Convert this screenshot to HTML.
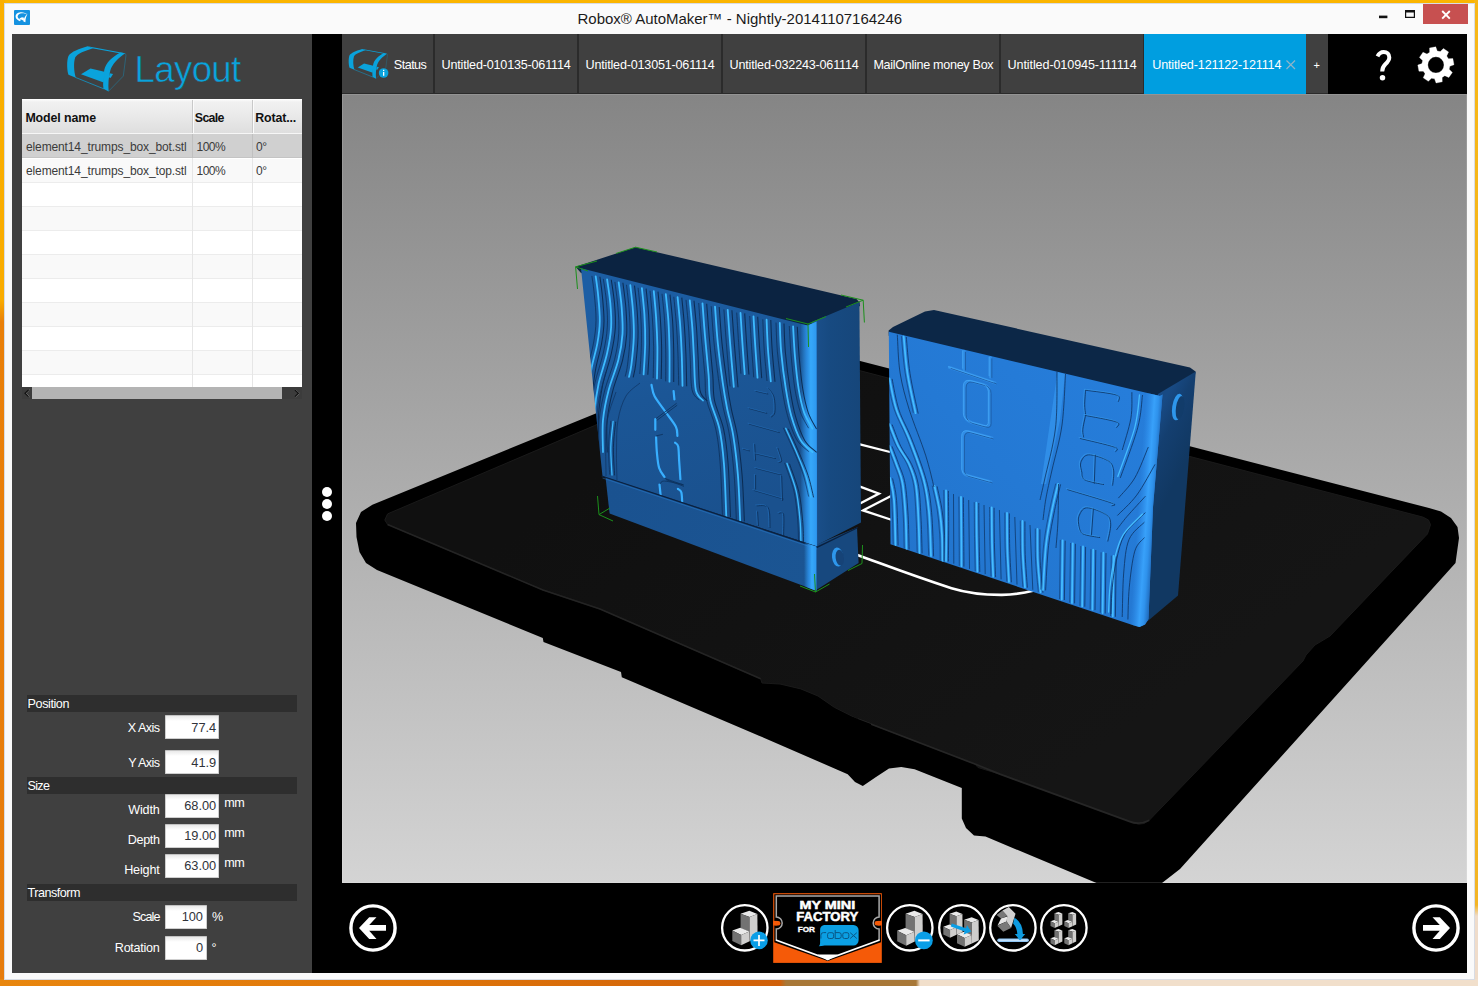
<!DOCTYPE html>
<html><head><meta charset="utf-8"><title>Robox AutoMaker</title>
<style>

html,body{margin:0;padding:0;}
body{width:1478px;height:986px;overflow:hidden;position:relative;background:#FAB400;font-family:"Liberation Sans",sans-serif;font-size:12.5px;color:#fff;}
.abs{position:absolute;}
.t{position:absolute;white-space:pre;line-height:1;}
#win{left:4px;top:3px;width:1471px;height:977px;background:#FAFAFA;box-sizing:border-box;border:1px solid #D8DCE4;}
#left{left:12px;top:34px;width:300px;height:939px;background:#404040;}
#gap{left:312px;top:34px;width:30px;height:939px;background:#000;}
#topbar{left:342px;top:34px;width:1125px;height:60px;background:#000;}
#view{left:342px;top:94px;width:1125px;height:789px;background:linear-gradient(#838383,#D4D4D4);overflow:hidden;}
#bot{left:342px;top:883px;width:1125px;height:90px;background:#000;}
.tab{position:absolute;top:34px;height:59px;background:#404040;border-bottom:1px solid #2b2b2b;box-sizing:content-box;}
.sep{position:absolute;top:34px;height:60px;width:2px;background:#2b2b2b;}
.hdr{position:absolute;left:27px;width:270px;height:17px;background:#2e2e2e;}
.inp{position:absolute;left:165px;width:54px;height:24px;background:linear-gradient(#e9e9e9 0,#f2f2f2 2px,#fff 5px);box-sizing:border-box;border:1px solid #cfcfcf;border-top-color:#c2c2c2;border-radius:1px;}
.inp.s{width:42px;}

</style></head>
<body>
<div class="abs" style="left:0;top:0;width:1478px;height:4px;background:#FBB500"></div>
<div class="abs" style="left:0;top:0;width:5px;height:986px;background:linear-gradient(#FAB000 0px,#F9AC00 300px,#E9800A 322px,#E67C0C 986px)"></div>
<div class="abs" style="left:1474px;top:0;width:4px;height:986px;background:linear-gradient(#F7B716 0px,#F3B424 905px,#EFDCCA 916px,#EFDCCA 986px)"></div>
<div class="abs" style="left:0;top:979px;width:1478px;height:7px;background:linear-gradient(90deg,#E8860E 0px,#DF760A 400px,#D0600A 780px,#A87838 786px,#A87838 916px,#F1DFCB 920px,#F1DFCB 1478px)"></div>
<div id="win" class="abs"></div>
<svg class="abs" style="left:14px;top:10px" width="16" height="15" viewBox="0 0 16 15"><rect width="16" height="15" rx="1" fill="#1592E0"/><path d="M6.5,2.2 C3,2.6 1.3,4.5 1.6,7 C2,9 4,10.5 6,11.2 L7,9.6 C5,9 3.6,7.8 3.6,6.4 C3.8,4.6 5.5,3.4 8,3.2 C10.5,3.2 12.5,3.8 13.8,4.8 C12,3 9.5,2 6.5,2.2Z M13.9,3.6 C12.5,5.5 11.5,8 11.4,12.3 L9.4,11.6 C9.6,9 11,5.5 13.9,3.6Z M5.2,8.6 L8,7.2 L10,7.8 L9.6,10.8Z" fill="#fff"/></svg>
<div class="t" style="left:577.50px;top:10px;font-size:15px;line-height:17px;color:#1a1a1a;letter-spacing:-0.013px;">Robox® AutoMaker™ - Nightly-20141107164246</div>

<div class="abs" style="left:1423px;top:4px;width:45px;height:20px;background:#C75050"></div>
<svg class="abs" style="left:1370px;top:4px" width="100" height="22" viewBox="1370 4 100 22"><path d="M1379,15.6h8.4v2.6h-8.4z" fill="#111"/><path d="M1405,10h10v8h-10z M1406.2,12.4v4.4h7.6v-4.4z" fill="#111" fill-rule="evenodd"/><path d="M1442.2,11 L1449.8,18.6 M1449.8,11 L1442.2,18.6" stroke="#fff" stroke-width="1.9" fill="none"/></svg>
<div id="left" class="abs"></div><div id="gap" class="abs"></div><div id="topbar" class="abs"></div><div id="bot" class="abs"></div>
<svg class="abs" style="left:320px;top:485px" width="14" height="38"><circle cx="7" cy="7" r="5" fill="#fff"/><circle cx="7" cy="19" r="5" fill="#fff"/><circle cx="7" cy="31" r="5" fill="#fff"/></svg>
<svg class="abs" style="left:0;top:0;width:0;height:0"><symbol id="prn" viewBox="0 0 1478 493" overflow="visible">
<path d="M265,72 C205,92 150,108 130,140 C116,175 120,245 130,272 L182,294 C168,250 165,190 177,152 C190,125 250,102 302,86 Z" fill="#0AA3DC"/>
<path d="M265,72 L528,121 L500,124 L296,87 Z" fill="#0AA3DC"/>
<path d="M495,116 C436,148 392,190 382,240 C374,290 372,340 376,372 L413,390 C408,340 413,284 424,244 C436,200 482,154 530,122 Z" fill="#0AA3DC"/>
<path d="M529,122 L535,134 L516,282 L412,389" fill="none" stroke="#0AA3DC" stroke-width="2.5"/>
<path d="M178,291 L379,372" stroke="#0AA3DC" stroke-width="5" fill="none"/>
<path d="M218,270 L285,228 L383,251 L378,327 Z" fill="#0AA3DC"/>
<path d="M420,262 L444,267 L426,295 L414,290 Z" fill="#0AA3DC"/>
</symbol></svg>
<svg class="abs" style="left:50px;top:36px" width="210" height="70"><use href="#prn" x="0" y="0" width="210" height="70.05"/></svg>
<div class="t" style="left:134.60px;top:49px;font-size:36.5px;line-height:41px;color:#0AA3DC;letter-spacing:-0.599px;-webkit-text-stroke:0.5px #404040;">Layout</div>

<div class="abs" style="left:22px;top:99px;width:280px;height:288px;background:#fff"></div>
<div class="abs" style="left:22px;top:99px;width:280px;height:35px;background:linear-gradient(#fafafa 0,#f1f1f1 2px,#e9e9e9 50%,#dedede 100%);box-sizing:border-box;border-top:1px solid #fff;border-bottom:1px solid #f6f6f6"></div>
<div class="abs" style="left:22px;top:134px;width:280px;height:24px;background:#d0d0d0;box-sizing:border-box;border-bottom:1px solid #c4c4c4"></div>
<div class="abs" style="left:22px;top:159.0px;width:280px;height:24px;background:#f9f9f9;box-sizing:border-box;border-bottom:1px solid #ececec"></div>
<div class="abs" style="left:22px;top:183.0px;width:280px;height:24px;background:#ffffff;box-sizing:border-box;border-bottom:1px solid #ececec"></div>
<div class="abs" style="left:22px;top:207.0px;width:280px;height:24px;background:#f9f9f9;box-sizing:border-box;border-bottom:1px solid #ececec"></div>
<div class="abs" style="left:22px;top:231.0px;width:280px;height:24px;background:#ffffff;box-sizing:border-box;border-bottom:1px solid #ececec"></div>
<div class="abs" style="left:22px;top:255.0px;width:280px;height:24px;background:#f9f9f9;box-sizing:border-box;border-bottom:1px solid #ececec"></div>
<div class="abs" style="left:22px;top:279.0px;width:280px;height:24px;background:#ffffff;box-sizing:border-box;border-bottom:1px solid #ececec"></div>
<div class="abs" style="left:22px;top:303.0px;width:280px;height:24px;background:#f9f9f9;box-sizing:border-box;border-bottom:1px solid #ececec"></div>
<div class="abs" style="left:22px;top:327.0px;width:280px;height:24px;background:#ffffff;box-sizing:border-box;border-bottom:1px solid #ececec"></div>
<div class="abs" style="left:22px;top:351.0px;width:280px;height:24px;background:#f9f9f9;box-sizing:border-box;border-bottom:1px solid #ececec"></div>
<div class="abs" style="left:22px;top:375.0px;width:280px;height:12.5px;background:#ffffff;box-sizing:border-box;border-bottom:1px solid #ececec"></div>
<div class="abs" style="left:192px;top:100px;width:1px;height:33px;background:#c9c9c9"></div><div class="abs" style="left:193px;top:100px;width:1px;height:33px;background:#fbfbfb"></div>
<div class="abs" style="left:192px;top:134px;width:1px;height:253px;background:#e6e6e6"></div>
<div class="abs" style="left:192px;top:134px;width:1px;height:24px;background:#c0c0c0"></div>
<div class="abs" style="left:252px;top:100px;width:1px;height:33px;background:#c9c9c9"></div><div class="abs" style="left:253px;top:100px;width:1px;height:33px;background:#fbfbfb"></div>
<div class="abs" style="left:252px;top:134px;width:1px;height:253px;background:#e6e6e6"></div>
<div class="abs" style="left:252px;top:134px;width:1px;height:24px;background:#c0c0c0"></div>
<div class="t" style="left:25.40px;top:111px;font-size:12.4px;line-height:14px;color:#111;letter-spacing:-0.106px;font-weight:bold;">Model name</div>

<div class="t" style="left:194.80px;top:111px;font-size:12.4px;line-height:14px;color:#111;letter-spacing:-0.681px;font-weight:bold;">Scale</div>

<div class="t" style="left:255.20px;top:111px;font-size:12.4px;line-height:14px;color:#111;letter-spacing:-0.128px;font-weight:bold;">Rotat...</div>

<div class="t" style="left:26.00px;top:140px;font-size:12px;line-height:14px;color:#3b3b3b;letter-spacing:-0.125px;">element14_trumps_box_bot.stl</div>

<div class="t" style="left:196.50px;top:140px;font-size:12px;line-height:14px;color:#3b3b3b;letter-spacing:-0.523px;">100%</div>

<div class="t" style="left:256.00px;top:140px;font-size:12px;line-height:14px;color:#3b3b3b;letter-spacing:-0.437px;">0°</div>

<div class="t" style="left:26.00px;top:164px;font-size:12px;line-height:14px;color:#3b3b3b;letter-spacing:-0.125px;">element14_trumps_box_top.stl</div>

<div class="t" style="left:196.50px;top:164px;font-size:12px;line-height:14px;color:#3b3b3b;letter-spacing:-0.523px;">100%</div>

<div class="t" style="left:256.00px;top:164px;font-size:12px;line-height:14px;color:#3b3b3b;letter-spacing:-0.437px;">0°</div>

<div class="abs" style="left:22px;top:387px;width:280px;height:12px;background:#3c3c3c"></div>
<div class="abs" style="left:32px;top:387px;width:250px;height:12px;background:#b4b4b4"></div>
<svg class="abs" style="left:22px;top:387px" width="280" height="12"><path d="M7.3,3 L3.8,6.3 L7.3,9.6" stroke="#b0b0b0" stroke-width="1" fill="none"/><path d="M6.6,3 L3.1,6.3 L6.6,9.6" stroke="#111" stroke-width="1.3" fill="none"/><path d="M273.7,3 L277.2,6.3 L273.7,9.6" stroke="#b0b0b0" stroke-width="1" fill="none"/><path d="M273,3 L276.5,6.3 L273,9.6" stroke="#111" stroke-width="1.3" fill="none"/></svg>
<div class="hdr" style="top:695px"></div>
<div class="t" style="left:27.60px;top:697px;font-size:12.6px;line-height:14px;color:#fff;letter-spacing:-0.428px;">Position</div>

<div class="hdr" style="top:777px"></div>
<div class="t" style="left:27.60px;top:779px;font-size:12.6px;line-height:14px;color:#fff;letter-spacing:-0.728px;">Size</div>

<div class="hdr" style="top:884px"></div>
<div class="t" style="left:27.60px;top:886px;font-size:12.6px;line-height:14px;color:#fff;letter-spacing:-0.505px;">Transform</div>

<div class="t" style="left:127.80px;top:721px;font-size:12.6px;line-height:14px;color:#fff;letter-spacing:-0.536px;">X Axis</div>

<div class="inp" style="top:715px"></div>
<div class="t" style="left:191.29px;top:720px;font-size:12.8px;line-height:15px;color:#30333a;">77.4</div>

<div class="t" style="left:128.20px;top:756px;font-size:12.6px;line-height:14px;color:#fff;letter-spacing:-0.564px;">Y Axis</div>

<div class="inp" style="top:750px"></div>
<div class="t" style="left:191.29px;top:755px;font-size:12.8px;line-height:15px;color:#30333a;">41.9</div>

<div class="t" style="left:128.20px;top:803px;font-size:12.6px;line-height:14px;color:#fff;letter-spacing:-0.162px;">Width</div>

<div class="inp" style="top:794px"></div>
<div class="t" style="left:184.17px;top:798px;font-size:12.8px;line-height:15px;color:#30333a;">68.00</div>

<div class="t" style="left:224.20px;top:796px;font-size:12.6px;line-height:14px;color:#fff;letter-spacing:-0.496px;">mm</div>

<div class="t" style="left:127.80px;top:833px;font-size:12.6px;line-height:14px;color:#fff;letter-spacing:-0.365px;">Depth</div>

<div class="inp" style="top:824px"></div>
<div class="t" style="left:184.17px;top:828px;font-size:12.8px;line-height:15px;color:#30333a;">19.00</div>

<div class="t" style="left:224.20px;top:826px;font-size:12.6px;line-height:14px;color:#fff;letter-spacing:-0.496px;">mm</div>

<div class="t" style="left:124.20px;top:863px;font-size:12.6px;line-height:14px;color:#fff;letter-spacing:-0.170px;">Height</div>

<div class="inp" style="top:854px"></div>
<div class="t" style="left:184.17px;top:858px;font-size:12.8px;line-height:15px;color:#30333a;">63.00</div>

<div class="t" style="left:224.20px;top:856px;font-size:12.6px;line-height:14px;color:#fff;letter-spacing:-0.496px;">mm</div>

<div class="t" style="left:132.60px;top:910px;font-size:12.6px;line-height:14px;color:#fff;letter-spacing:-0.904px;">Scale</div>

<div class="inp s" style="top:905px"></div>
<div class="t" style="left:181.64px;top:909px;font-size:12.8px;line-height:15px;color:#30333a;">100</div>

<div class="t" style="left:212.00px;top:910px;font-size:12.6px;line-height:14px;color:#fff;letter-spacing:-1.203px;">%</div>

<div class="t" style="left:114.80px;top:941px;font-size:12.6px;line-height:14px;color:#fff;letter-spacing:-0.266px;">Rotation</div>

<div class="inp s" style="top:936px"></div>
<div class="t" style="left:195.88px;top:940px;font-size:12.8px;line-height:15px;color:#30333a;">0</div>

<div class="t" style="left:211.60px;top:941px;font-size:12.6px;line-height:14px;color:#fff;">°</div>

<div class="tab" style="left:342px;width:91px"></div>
<div class="sep" style="left:433px"></div>
<div class="tab" style="left:435px;width:142px"></div>
<div class="sep" style="left:577px"></div>
<div class="t" style="left:441.60px;top:58px;font-size:12.6px;line-height:14px;color:#fff;letter-spacing:-0.197px;">Untitled-010135-061114</div>

<div class="tab" style="left:579px;width:142px"></div>
<div class="sep" style="left:721px"></div>
<div class="t" style="left:585.60px;top:58px;font-size:12.6px;line-height:14px;color:#fff;letter-spacing:-0.197px;">Untitled-013051-061114</div>

<div class="tab" style="left:723px;width:142px"></div>
<div class="sep" style="left:865px"></div>
<div class="t" style="left:729.60px;top:58px;font-size:12.6px;line-height:14px;color:#fff;letter-spacing:-0.197px;">Untitled-032243-061114</div>

<div class="tab" style="left:867px;width:132px"></div>
<div class="sep" style="left:999px"></div>
<div class="tab" style="left:1001px;width:142px"></div>
<div class="sep" style="left:1143px"></div>
<div class="t" style="left:1007.60px;top:58px;font-size:12.6px;line-height:14px;color:#fff;letter-spacing:-0.112px;">Untitled-010945-111114</div>

<div class="t" style="left:393.80px;top:58px;font-size:12.6px;line-height:14px;color:#fff;letter-spacing:-0.520px;">Status</div>

<div class="t" style="left:873.40px;top:58px;font-size:12.6px;line-height:14px;color:#fff;letter-spacing:-0.303px;">MailOnline money Box</div>

<svg class="abs" style="left:337px;top:39px" width="60" height="50" viewBox="337 39 60 50"><use href="#prn" x="337.3" y="42.2" width="138.6" height="46.2"/><circle cx="383.6" cy="73" r="5.6" fill="#404040"/><circle cx="383.6" cy="73" r="4.8" fill="#0AA3DC"/><rect x="383" y="72" width="1.3" height="3.8" fill="#fff"/><rect x="383" y="69.8" width="1.3" height="1.3" fill="#fff"/></svg>
<div class="abs" style="left:1144px;top:34px;width:162px;height:60px;background:#009EE0"></div>
<div class="t" style="left:1152.20px;top:58px;font-size:12.6px;line-height:14px;color:#fff;letter-spacing:-0.146px;">Untitled-121122-121114</div>

<svg class="abs" style="left:1284px;top:58px" width="14" height="14"><path d="M2.5,2.5 L11,11 M11,2.5 L2.5,11" stroke="#8FB4C8" stroke-width="1.2" fill="none"/></svg>
<div class="tab" style="left:1306px;width:22px"></div>
<div class="t" style="left:1313.60px;top:59px;font-size:11px;line-height:12px;color:#fff;">+</div>

<svg class="abs" style="left:1370px;top:44px" width="30" height="42" viewBox="1370 44 30 42"><path d="M1377.5,56.4 C1379,53.4 1381,52 1383.7,52 C1387,52 1389.3,54.2 1389.3,57.4 C1389.3,60.4 1387.4,62.2 1385.3,64.2 C1383.2,66.2 1382.2,67.8 1382.2,71.6" stroke="#fff" stroke-width="4" fill="none"/><circle cx="1382.5" cy="77.7" r="2.75" fill="#fff"/></svg>
<svg class="abs" style="left:1414px;top:43px" width="46" height="44" viewBox="1414 43 46 44"><path d="M1429.65,52.37 L1429.56,47.95 L1435.74,46.80 L1437.24,50.96 L1440.34,51.62 L1443.41,48.43 L1448.59,51.99 L1446.70,55.99 L1448.43,58.65 L1452.85,58.56 L1454.00,64.74 L1449.84,66.24 L1449.18,69.34 L1452.37,72.41 L1448.81,77.59 L1444.81,75.70 L1442.15,77.43 L1442.24,81.85 L1436.06,83.00 L1434.56,78.84 L1431.46,78.18 L1428.39,81.37 L1423.21,77.81 L1425.10,73.81 L1423.37,71.15 L1418.95,71.24 L1417.80,65.06 L1421.96,63.56 L1422.62,60.46 L1419.43,57.39 L1422.99,52.21 L1426.99,54.10 Z M1444.00,64.9 a8.1,8.1 0 1,0 -16.2,0 a8.1,8.1 0 1,0 16.2,0Z" fill="#fff" fill-rule="evenodd" stroke="#fff" stroke-width="0.3" stroke-linejoin="round"/></svg><svg class="abs" style="left:342px;top:94px" width="1125" height="789" viewBox="342 94 1125 789"><defs>
<linearGradient id="bgg" x1="0" y1="94" x2="0" y2="883" gradientUnits="userSpaceOnUse"><stop offset="0" stop-color="#858585"/><stop offset="1" stop-color="#D4D4D4"/></linearGradient>
<linearGradient id="bedg" x1="700" y1="400" x2="1000" y2="820" gradientUnits="userSpaceOnUse"><stop offset="0" stop-color="#101010"/><stop offset="1" stop-color="#151515"/></linearGradient>
<linearGradient id="lfg" x1="640" y1="290" x2="700" y2="520" gradientUnits="userSpaceOnUse"><stop offset="0" stop-color="#1C5EA4"/><stop offset=".45" stop-color="#1B5696"/><stop offset="1" stop-color="#1A518E"/></linearGradient>
<linearGradient id="lbg" x1="605" y1="500" x2="816" y2="570" gradientUnits="userSpaceOnUse"><stop offset="0" stop-color="#1A5290"/><stop offset="1" stop-color="#1B5593"/></linearGradient>
<linearGradient id="lsg" x1="816" y1="0" x2="862" y2="0" gradientUnits="userSpaceOnUse"><stop offset="0" stop-color="#1A4F8A"/><stop offset=".3" stop-color="#174A81"/><stop offset="1" stop-color="#16467A"/></linearGradient>
<linearGradient id="lhl" x1="0" y1="0" x2="1" y2="0"><stop offset="0" stop-color="#2E9BF0" stop-opacity="0"/><stop offset=".35" stop-color="#2C90E8" stop-opacity=".85"/><stop offset=".6" stop-color="#36A8FA"/><stop offset=".9" stop-color="#2F9AF1"/><stop offset="1" stop-color="#2888E0"/></linearGradient>
<linearGradient id="rfg" x1="890" y1="560" x2="1100" y2="360" gradientUnits="userSpaceOnUse"><stop offset="0" stop-color="#2274CC"/><stop offset=".5" stop-color="#2479D4"/><stop offset="1" stop-color="#267DDA"/></linearGradient>
<linearGradient id="rhl" x1="0" y1="0" x2="1" y2="0"><stop offset="0" stop-color="#2E90EE" stop-opacity="0"/><stop offset=".5" stop-color="#38A1FA"/><stop offset=".72" stop-color="#2F92EC"/><stop offset="1" stop-color="#1F69BA"/></linearGradient>
<linearGradient id="rsg" x1="1155" y1="420" x2="1196" y2="440" gradientUnits="userSpaceOnUse"><stop offset="0" stop-color="#184A84"/><stop offset=".35" stop-color="#143F70"/><stop offset="1" stop-color="#113862"/></linearGradient>
</defs><rect x="342" y="94" width="1125" height="789" fill="url(#bgg)"/><polygon points="773.0,338.5 1429.0,508.0 1441.0,511.5 1451.0,518.0 1457.5,527.0 1459.0,538.0 1455.5,563.0 1180.0,869.0 1162.0,883.0 1096.5,883.0 985.5,836.6 974.0,835.5 966.0,828.0 961.8,818.4 961.8,788.0 914.6,769.2 901.3,766.9 889.0,768.6 876.0,777.0 862.8,786.0 855.0,782.0 847.7,774.2 759.0,735.7 621.8,677.2 621.0,672.0 543.5,642.0 542.8,638.0 377.0,570.0 366.0,563.0 359.5,552.0 356.5,537.0 356.0,523.0 361.0,512.0 372.4,504.7 594.5,414.0" fill="#000"/><polygon points="770.0,347.3 1422.9,517.1 1428.5,520.0 1430.5,524.7 1427.5,533.9 1330.0,636.0 1315.0,645.0 1306.0,655.0 1303.0,661.0 1149.3,820.2 1144.0,823.5 1138.4,824.2 1129.3,821.3 1000.0,774.2 978.0,767.5 975.0,764.0 857.7,719.0 834.3,707.3 818.0,696.0 800.8,688.9 780.0,684.0 762.0,683.0 760.7,678.8 600.0,609.0 543.0,590.0 387.6,524.5 384.8,520.0 387.6,513.9 594.5,425.6" fill="url(#bedg)" stroke="#1a1a1a" stroke-width="1"/><path d="M387.6,524.5 L543,590 L600,609 L760.7,678.8" stroke="#242424" stroke-width="1.6" fill="none"/><path d="M857.7,719 L975,764 L1000,774.2 L1129.3,821.3 Q1139,825.5 1149.3,820.2" stroke="#262626" stroke-width="1.8" fill="none"/><polygon points="852.5,717 871,724 871,740 852.5,733" fill="#000"/><g stroke="#fff" fill="none" stroke-width="2.3" stroke-linejoin="miter"><path d="M858,443.8 L892,452.5"/><path d="M858,485.8 L879,493.6 L860,503.6"/><path d="M892,495.4 L863,510.4 L892,520"/><path d="M855,554.2 C880,563 905,573 951.5,588.3 C965,592.5 980,595 1002,594.9 C1012,594.6 1022,593.5 1034,590.5" stroke-width="2.6"/></g><polygon points="575.6,266.8 635.5,247.2 856.5,299.0 859.5,302.5 860.0,306.0 808.0,330.0 581.0,273.0" fill="#0B2341"/><polygon points="812.0,322.0 859.4,302.0 861.0,522.5 816.0,545.5" fill="url(#lsg)"/><polygon points="815.5,545.0 857.0,527.5 858.6,563.0 815.5,590.5" fill="#17487E"/><polygon points="605.5,477.0 816.0,546.5 816.0,590.5 609.6,513.6" fill="url(#lbg)"/><polygon points="581.0,268.3 807.5,325.5 816.6,321.5 817.2,546.5 602.5,476.2" fill="url(#lfg)"/><clipPath id="clA"><polygon points="581.0,268.3 807.5,325.5 816.6,321.5 817.2,546.5 602.5,476.2"/></clipPath><g clip-path="url(#clA)"><rect x="800.5" y="318" width="17" height="232" fill="url(#lhl)"/><path d="M595.7,276.3 C596.1,279.4 597.4,287.5 598.1,294.9 C598.8,302.3 599.9,312.8 599.8,320.9 C599.7,329.0 598.7,335.8 597.3,343.6 C595.9,351.4 593.1,359.8 591.6,367.9 C590.1,376.0 588.6,388.0 588.0,392.0" stroke="#3DBBFF" stroke-width="1.8" fill="none" stroke-linecap="round"/><path d="M599.9,276.7 C600.3,279.8 601.6,287.9 602.3,295.3 C603.0,302.7 604.1,313.2 604.0,321.3 C603.9,329.4 602.9,336.2 601.5,344.0 C600.1,351.8 597.4,360.2 595.8,368.3 C594.3,376.4 592.8,388.4 592.2,392.4" stroke="#0B2A50" stroke-width="1.035" fill="none" opacity="0.95"/><path d="M591.9,275.9 C592.3,279.0 593.6,287.1 594.3,294.5 C595.0,301.9 596.2,312.4 596.0,320.5 C595.9,328.6 594.9,335.4 593.5,343.2 C592.2,351.0 589.4,359.4 587.8,367.5 C586.3,375.6 584.8,387.6 584.2,391.6" stroke="#0B2A50" stroke-width="0.9" fill="none" opacity="0.75"/><path d="M607.1,279.3 C607.6,283.2 609.6,295.0 610.3,303.0 C611.0,311.0 611.6,319.0 611.1,327.4 C610.6,335.8 609.2,343.8 607.1,353.3 C605.0,362.8 600.6,374.4 598.5,384.2 C596.4,394.0 595.2,402.7 594.5,412.0 C593.8,421.3 594.1,435.3 594.0,440.0" stroke="#3DBBFF" stroke-width="1.8" fill="none" stroke-linecap="round"/><path d="M611.3,279.7 C611.8,283.6 613.8,295.4 614.5,303.4 C615.2,311.4 615.8,319.4 615.3,327.8 C614.8,336.2 613.4,344.2 611.3,353.7 C609.2,363.2 604.8,374.8 602.7,384.6 C600.6,394.4 599.5,403.1 598.7,412.4 C598.0,421.7 598.3,435.7 598.2,440.4" stroke="#0B2A50" stroke-width="1.035" fill="none" opacity="0.95"/><path d="M603.3,278.9 C603.9,282.9 605.9,294.6 606.5,302.6 C607.2,310.6 607.9,318.6 607.3,327.0 C606.8,335.4 605.4,343.4 603.3,352.9 C601.2,362.4 596.8,374.0 594.7,383.8 C592.6,393.6 591.5,402.3 590.7,411.6 C590.0,420.9 590.3,434.9 590.2,439.6" stroke="#0B2A50" stroke-width="0.9" fill="none" opacity="0.75"/><path d="M618.7,282.3 C619.2,286.6 621.1,299.3 621.7,307.9 C622.3,316.5 623.0,325.2 622.5,333.9 C622.0,342.5 620.7,350.4 618.4,359.8 C616.1,369.2 611.3,380.0 608.7,390.0 C606.1,400.0 604.0,409.7 603.0,420.0 C602.0,430.3 603.0,446.7 603.0,452.0" stroke="#3DBBFF" stroke-width="1.8" fill="none" stroke-linecap="round"/><path d="M622.9,282.7 C623.4,287.0 625.3,299.7 625.9,308.3 C626.5,316.9 627.2,325.6 626.7,334.3 C626.2,342.9 624.9,350.8 622.6,360.2 C620.3,369.6 615.5,380.4 612.9,390.4 C610.3,400.4 608.2,410.1 607.2,420.4 C606.2,430.7 607.2,447.1 607.2,452.4" stroke="#0B2A50" stroke-width="1.035" fill="none" opacity="0.95"/><path d="M614.9,281.9 C615.4,286.2 617.3,298.9 617.9,307.5 C618.6,316.1 619.3,324.9 618.7,333.5 C618.2,342.1 616.9,350.1 614.6,359.4 C612.3,368.8 607.5,379.6 604.9,389.6 C602.4,399.6 600.2,409.3 599.2,419.6 C598.3,429.9 599.2,446.3 599.2,451.6" stroke="#0B2A50" stroke-width="0.9" fill="none" opacity="0.75"/><path d="M630.3,285.2 C630.8,289.5 632.4,302.5 633.0,311.1 C633.6,319.8 634.1,328.2 633.8,337.1 C633.5,346.0 632.2,358.1 631.4,364.7 C630.6,371.3 629.4,374.9 629.0,376.9" stroke="#3DBBFF" stroke-width="1.8" fill="none" stroke-linecap="round"/><path d="M634.5,285.6 C635.0,289.9 636.6,302.9 637.2,311.5 C637.8,320.1 638.3,328.6 638.0,337.5 C637.7,346.4 636.4,358.5 635.6,365.1 C634.8,371.7 633.6,375.3 633.2,377.3" stroke="#0B2A50" stroke-width="1.035" fill="none" opacity="0.95"/><path d="M626.5,284.8 C627.0,289.1 628.6,302.1 629.2,310.7 C629.8,319.4 630.3,327.8 630.0,336.7 C629.8,345.6 628.4,357.7 627.6,364.3 C626.8,370.9 625.6,374.5 625.2,376.5" stroke="#0B2A50" stroke-width="0.9" fill="none" opacity="0.75"/><path d="M641.9,288.2 C642.3,292.6 643.8,305.2 644.4,314.4 C645.0,323.6 645.3,333.6 645.2,343.6 C645.1,353.6 643.9,369.3 643.6,374.4" stroke="#3DBBFF" stroke-width="1.8" fill="none" stroke-linecap="round"/><path d="M646.1,288.6 C646.5,293.0 648.0,305.6 648.6,314.8 C649.2,324.0 649.5,334.0 649.4,344.0 C649.3,354.0 648.1,369.7 647.8,374.8" stroke="#0B2A50" stroke-width="1.035" fill="none" opacity="0.95"/><path d="M638.1,287.8 C638.5,292.2 640.1,304.8 640.6,314.0 C641.2,323.2 641.6,333.2 641.4,343.2 C641.3,353.2 640.1,368.9 639.8,374.0" stroke="#0B2A50" stroke-width="0.9" fill="none" opacity="0.75"/><path d="M653.8,291.2 C654.2,295.6 655.5,308.3 656.1,317.6 C656.7,326.9 657.2,336.7 657.4,346.8 C657.5,356.9 657.1,373.2 657.0,378.5" stroke="#3DBBFF" stroke-width="1.8" fill="none" stroke-linecap="round"/><path d="M658.0,291.6 C658.4,296.0 659.7,308.7 660.3,318.0 C660.9,327.3 661.5,337.1 661.6,347.2 C661.8,357.3 661.3,373.6 661.2,378.9" stroke="#0B2A50" stroke-width="1.035" fill="none" opacity="0.95"/><path d="M650.0,290.8 C650.4,295.2 651.7,307.9 652.3,317.2 C652.9,326.5 653.5,336.3 653.6,346.4 C653.8,356.6 653.3,372.8 653.2,378.1" stroke="#0B2A50" stroke-width="0.9" fill="none" opacity="0.75"/><path d="M665.8,294.2 C666.2,298.6 667.8,311.6 668.4,320.9 C669.0,330.2 669.3,340.0 669.5,350.1 C669.7,360.2 669.5,376.4 669.5,381.7" stroke="#3DBBFF" stroke-width="1.8" fill="none" stroke-linecap="round"/><path d="M670.0,294.6 C670.4,299.0 672.0,312.0 672.6,321.3 C673.2,330.6 673.5,340.4 673.7,350.5 C673.9,360.6 673.7,376.8 673.7,382.1" stroke="#0B2A50" stroke-width="1.035" fill="none" opacity="0.95"/><path d="M662.0,293.8 C662.5,298.2 664.0,311.2 664.6,320.5 C665.2,329.8 665.5,339.6 665.7,349.7 C665.9,359.8 665.7,376.0 665.7,381.3" stroke="#0B2A50" stroke-width="0.9" fill="none" opacity="0.75"/><path d="M677.6,297.2 C678.0,301.7 679.4,314.8 680.1,324.1 C680.8,333.5 681.3,343.0 681.7,353.3 C682.1,363.6 682.4,380.4 682.5,385.8" stroke="#3DBBFF" stroke-width="1.8" fill="none" stroke-linecap="round"/><path d="M681.8,297.6 C682.2,302.1 683.6,315.1 684.3,324.5 C685.0,333.9 685.5,343.4 685.9,353.7 C686.3,364.0 686.6,380.8 686.7,386.2" stroke="#0B2A50" stroke-width="1.035" fill="none" opacity="0.95"/><path d="M673.8,296.8 C674.2,301.3 675.6,314.4 676.3,323.7 C677.0,333.1 677.5,342.6 677.9,352.9 C678.3,363.2 678.6,380.0 678.7,385.4" stroke="#0B2A50" stroke-width="0.9" fill="none" opacity="0.75"/><path d="M689.8,300.3 C690.2,304.8 691.6,318.0 692.3,327.4 C693.0,336.8 693.3,346.2 693.9,356.6 C694.5,367.0 694.3,382.7 695.8,390.0 C697.3,397.3 701.8,398.8 703.0,400.5" stroke="#3DBBFF" stroke-width="1.8" fill="none" stroke-linecap="round"/><path d="M694.0,300.7 C694.4,305.2 695.8,318.4 696.5,327.8 C697.2,337.2 697.5,346.6 698.1,357.0 C698.7,367.4 698.5,383.1 700.0,390.4 C701.5,397.7 706.0,399.1 707.2,400.9" stroke="#0B2A50" stroke-width="1.035" fill="none" opacity="0.95"/><path d="M686.0,299.9 C686.4,304.4 687.8,317.6 688.5,327.0 C689.2,336.4 689.5,345.8 690.1,356.2 C690.7,366.6 690.5,382.3 692.0,389.6 C693.5,396.9 698.0,398.4 699.2,400.1" stroke="#0B2A50" stroke-width="0.9" fill="none" opacity="0.75"/><path d="M702.5,303.4 C702.9,308.7 703.9,323.1 704.9,335.0 C705.9,346.9 707.7,364.2 708.6,375.0 C709.5,385.8 708.5,391.1 710.3,400.0 C712.1,408.9 717.0,417.8 719.3,428.3 C721.6,438.9 722.7,448.5 723.9,463.3 C725.1,478.1 725.9,508.0 726.3,516.9" stroke="#3DBBFF" stroke-width="1.8" fill="none" stroke-linecap="round"/><path d="M706.7,303.8 C707.1,309.1 708.1,323.5 709.1,335.4 C710.1,347.3 711.9,364.6 712.8,375.4 C713.7,386.2 712.7,391.5 714.5,400.4 C716.3,409.3 721.2,418.1 723.5,428.7 C725.8,439.2 726.9,448.9 728.1,463.7 C729.3,478.5 730.1,508.4 730.5,517.3" stroke="#0B2A50" stroke-width="1.035" fill="none" opacity="0.95"/><path d="M698.7,303.0 C699.1,308.3 700.1,322.7 701.1,334.6 C702.1,346.5 703.9,363.8 704.8,374.6 C705.7,385.4 704.7,390.7 706.5,399.6 C708.3,408.5 713.3,417.4 715.5,427.9 C717.8,438.5 719.0,448.1 720.1,462.9 C721.3,477.7 722.1,507.6 722.5,516.5" stroke="#0B2A50" stroke-width="0.9" fill="none" opacity="0.75"/><path d="M715.0,306.6 C715.5,312.7 716.5,330.2 717.8,343.0 C719.1,355.8 721.3,372.4 722.8,383.2 C724.3,394.0 725.3,399.3 727.0,408.0 C728.7,416.7 731.4,424.2 733.2,435.3 C735.0,446.4 736.7,460.6 737.9,474.9 C739.1,489.2 739.8,513.3 740.2,521.0" stroke="#3DBBFF" stroke-width="1.8" fill="none" stroke-linecap="round"/><path d="M719.2,307.0 C719.7,313.1 720.7,330.6 722.0,343.4 C723.3,356.2 725.5,372.8 727.0,383.6 C728.5,394.4 729.5,399.7 731.2,408.4 C732.9,417.1 735.6,424.6 737.4,435.7 C739.2,446.8 740.9,461.0 742.1,475.3 C743.3,489.6 744.0,513.7 744.4,521.4" stroke="#0B2A50" stroke-width="1.035" fill="none" opacity="0.95"/><path d="M711.2,306.2 C711.7,312.3 712.7,329.8 714.0,342.6 C715.3,355.4 717.5,372.0 719.0,382.8 C720.6,393.6 721.5,398.9 723.2,407.6 C725.0,416.3 727.6,423.8 729.4,434.9 C731.2,446.1 733.0,460.2 734.1,474.5 C735.3,488.8 736.0,512.9 736.4,520.6" stroke="#0B2A50" stroke-width="0.9" fill="none" opacity="0.75"/><path d="M727.7,309.8 C728.1,315.3 729.1,330.2 730.1,343.0 C731.1,355.8 733.2,379.5 733.8,386.8" stroke="#3DBBFF" stroke-width="1.8" fill="none" stroke-linecap="round"/><path d="M731.9,310.2 C732.3,315.7 733.3,330.6 734.3,343.4 C735.3,356.2 737.4,379.9 738.0,387.2" stroke="#0B2A50" stroke-width="1.035" fill="none" opacity="0.95"/><path d="M723.9,309.4 C724.3,314.9 725.3,329.8 726.3,342.6 C727.3,355.4 729.4,379.1 730.0,386.4" stroke="#0B2A50" stroke-width="0.9" fill="none" opacity="0.75"/><path d="M740.5,313.0 C740.8,318.0 741.7,332.8 742.4,343.0 C743.1,353.2 744.3,368.9 744.7,374.1" stroke="#3DBBFF" stroke-width="1.8" fill="none" stroke-linecap="round"/><path d="M744.7,313.4 C745.0,318.4 745.9,333.2 746.6,343.4 C747.3,353.6 748.5,369.3 748.9,374.5" stroke="#0B2A50" stroke-width="1.035" fill="none" opacity="0.95"/><path d="M736.7,312.6 C737.0,317.6 737.9,332.4 738.6,342.6 C739.3,352.8 740.5,368.5 740.9,373.7" stroke="#0B2A50" stroke-width="0.9" fill="none" opacity="0.75"/><path d="M753.5,316.4 C753.8,321.4 754.6,336.5 755.3,346.7 C756.0,356.9 757.1,372.5 757.5,377.7" stroke="#3DBBFF" stroke-width="1.8" fill="none" stroke-linecap="round"/><path d="M757.7,316.8 C758.0,321.8 758.8,336.9 759.5,347.1 C760.2,357.3 761.3,372.9 761.7,378.1" stroke="#0B2A50" stroke-width="1.035" fill="none" opacity="0.95"/><path d="M749.7,316.0 C750.0,321.1 750.9,336.1 751.5,346.3 C752.2,356.5 753.4,372.1 753.7,377.3" stroke="#0B2A50" stroke-width="0.9" fill="none" opacity="0.75"/><path d="M766.6,319.7 C766.8,324.5 767.2,338.2 767.9,348.5 C768.6,358.8 770.3,375.9 770.8,381.4" stroke="#3DBBFF" stroke-width="1.8" fill="none" stroke-linecap="round"/><path d="M770.8,320.1 C771.0,324.9 771.4,338.6 772.1,348.9 C772.8,359.2 774.5,376.3 775.0,381.8" stroke="#0B2A50" stroke-width="1.035" fill="none" opacity="0.95"/><path d="M762.8,319.3 C763.0,324.1 763.4,337.8 764.1,348.1 C764.8,358.4 766.5,375.5 767.0,381.0" stroke="#0B2A50" stroke-width="0.9" fill="none" opacity="0.75"/><path d="M779.8,323.0 C780.0,327.9 780.2,341.2 781.2,352.1 C782.2,363.1 784.1,378.1 785.8,388.7 C787.5,399.3 788.8,407.4 791.3,416.0 C793.8,424.6 797.0,434.0 800.5,440.0 C804.0,446.0 810.5,450.0 812.5,452.0" stroke="#3DBBFF" stroke-width="1.8" fill="none" stroke-linecap="round"/><path d="M784.0,323.4 C784.2,328.2 784.4,341.6 785.4,352.5 C786.4,363.4 788.3,378.4 790.0,389.1 C791.7,399.7 793.0,407.8 795.5,416.4 C798.0,424.9 801.2,434.4 804.7,440.4 C808.2,446.4 814.7,450.4 816.7,452.4" stroke="#0B2A50" stroke-width="1.035" fill="none" opacity="0.95"/><path d="M776.0,322.6 C776.3,327.5 776.4,340.8 777.4,351.7 C778.4,362.7 780.3,377.7 782.0,388.3 C783.7,398.9 785.1,407.1 787.5,415.6 C790.0,424.2 793.2,433.6 796.7,439.6 C800.3,445.6 806.7,449.6 808.7,451.6" stroke="#0B2A50" stroke-width="0.9" fill="none" opacity="0.75"/><path d="M793.1,326.4 C793.4,331.3 794.0,345.4 794.9,355.8 C795.8,366.2 797.1,379.3 798.6,388.7 C800.1,398.1 801.8,405.8 804.1,412.4 C806.4,419.0 811.0,425.9 812.4,428.6" stroke="#3DBBFF" stroke-width="1.8" fill="none" stroke-linecap="round"/><path d="M797.3,326.8 C797.6,331.7 798.2,345.8 799.1,356.2 C800.0,366.6 801.3,379.7 802.8,389.1 C804.3,398.5 806.0,406.1 808.3,412.8 C810.6,419.4 815.2,426.3 816.6,429.0" stroke="#0B2A50" stroke-width="1.035" fill="none" opacity="0.95"/><path d="M789.3,326.0 C789.6,330.9 790.2,345.0 791.1,355.4 C792.0,365.8 793.3,378.9 794.8,388.3 C796.4,397.7 798.0,405.4 800.3,412.0 C802.6,418.6 807.2,425.5 808.6,428.2" stroke="#0B2A50" stroke-width="0.9" fill="none" opacity="0.75"/><path d="M785.7,428.3 C787.5,432.2 792.9,443.8 796.2,451.6 C799.5,459.4 803.0,467.4 805.5,475.0 C808.0,482.6 810.1,493.3 811.0,497.0" stroke="#3DBBFF" stroke-width="1.4" fill="none" stroke-linecap="round"/><path d="M788.3,428.7 C790.1,432.6 795.5,444.2 798.8,452.0 C802.1,459.8 805.6,467.8 808.1,475.4 C810.6,483.0 812.7,493.7 813.6,497.4" stroke="#0B2A50" stroke-width="0.9199999999999999" fill="none" opacity="0.95"/><path d="M783.4,427.9 C785.1,431.8 790.6,443.4 793.9,451.2 C797.2,459.0 800.7,467.0 803.2,474.6 C805.6,482.2 807.7,492.9 808.7,496.6" stroke="#0B2A50" stroke-width="0.8" fill="none" opacity="0.75"/><path d="M786.9,463.3 C788.5,468.0 794.0,481.9 796.2,491.3 C798.4,500.8 799.2,511.4 800.0,520.0 C800.8,528.5 800.8,538.8 800.9,542.6" stroke="#3DBBFF" stroke-width="1.4" fill="none" stroke-linecap="round"/><path d="M789.5,463.7 C791.0,468.4 796.6,482.2 798.8,491.7 C801.0,501.1 801.8,511.8 802.6,520.4 C803.4,528.9 803.4,539.2 803.5,543.0" stroke="#0B2A50" stroke-width="0.9199999999999999" fill="none" opacity="0.95"/><path d="M784.6,462.9 C786.1,467.6 791.7,481.5 793.9,490.9 C796.0,500.4 796.9,511.1 797.7,519.6 C798.4,528.1 798.4,538.4 798.6,542.2" stroke="#0B2A50" stroke-width="0.8" fill="none" opacity="0.75"/><path d="M613.1,421.3 C612.7,425.6 611.0,438.1 610.8,447.0 C610.6,455.9 611.8,470.3 612.0,475.0" stroke="#3DBBFF" stroke-width="1.3" fill="none" stroke-linecap="round"/><path d="M615.7,421.7 C615.3,426.0 613.6,438.4 613.4,447.4 C613.2,456.3 614.4,470.7 614.6,475.4" stroke="#0B2A50" stroke-width="0.9199999999999999" fill="none" opacity="0.95"/><path d="M610.8,420.9 C610.4,425.2 608.6,437.7 608.5,446.6 C608.3,455.6 609.5,469.9 609.7,474.6" stroke="#0B2A50" stroke-width="0.8" fill="none" opacity="0.75"/><path d="M606.0,372.0 C604.7,377.5 599.5,393.7 598.0,405.0 C596.5,416.3 596.7,428.2 597.0,440.0 C597.3,451.8 599.5,470.0 600.0,476.0" stroke="#0F3462" stroke-width="0.8" fill="none" opacity="0.9"/><path d="M616.0,392.0 C614.4,397.5 608.2,411.0 606.5,425.0 C604.8,439.0 606.1,467.5 606.0,476.0" stroke="#0F3462" stroke-width="0.8" fill="none" opacity="0.9"/><path d="M640.0,383.0 C637.7,385.2 629.7,389.8 626.0,396.0 C622.3,402.2 619.6,411.0 618.0,420.0 C616.4,429.0 616.7,440.0 616.5,450.0 C616.3,460.0 616.9,475.0 617.0,480.0" stroke="#0F3462" stroke-width="0.8" fill="none" opacity="0.9"/><path d="M651.5,384.9 C652.0,386.8 652.3,391.9 654.6,396.3 C656.9,400.7 661.7,406.4 665.2,411.5 C668.8,416.6 673.9,422.6 675.9,426.7 C677.9,430.8 677.1,434.4 677.4,435.9" stroke="#38AFFF" stroke-width="2.2" fill="none" stroke-linecap="round"/><path d="M673.6,391.0 L674.4,399.4" stroke="#38AFFF" stroke-width="2.2" fill="none" stroke-linecap="round"/><path d="M655.3,419.1 L655.3,429.8" stroke="#38AFFF" stroke-width="2.2" fill="none" stroke-linecap="round"/><path d="M656.1,437.4 C656.2,439.9 656.4,447.5 656.9,452.6 C657.4,457.7 657.8,463.7 659.1,467.8 C660.4,471.9 663.6,475.5 664.5,477.0" stroke="#38AFFF" stroke-width="2.2" fill="none" stroke-linecap="round"/><path d="M675.1,442.7 C675.6,443.3 677.5,443.3 678.2,446.5 C678.9,449.7 678.8,456.2 679.2,461.7 C679.6,467.1 680.2,476.3 680.4,479.2" stroke="#38AFFF" stroke-width="2.2" fill="none" stroke-linecap="round"/><path d="M659.5,484.5 L660.6,495.1" stroke="#38AFFF" stroke-width="2.2" fill="none" stroke-linecap="round"/><path d="M677.9,488.9 C678.5,489.5 680.6,490.0 681.3,492.3 C682.0,494.6 682.1,501.1 682.2,502.9" stroke="#38AFFF" stroke-width="2.2" fill="none" stroke-linecap="round"/><path d="M676.6,403.3 L656.1,418.5" stroke="#0E315C" stroke-width="0.9" fill="none" opacity="0.9"/><path d="M677.2,405.2 L656.9,420.3" stroke="#0E315C" stroke-width="0.9" fill="none" opacity="0.9"/><path d="M656.1,435.9 L662.9,434.3" stroke="#0E315C" stroke-width="0.9" fill="none" opacity="0.9"/><path d="M664.5,478.3 L683.5,485.0" stroke="#0E315C" stroke-width="0.9" fill="none" opacity="0.9"/><path d="M660.0,483.9 C660.8,483.4 660.6,481.0 664.5,481.1 C668.4,481.2 680.3,484.1 683.5,484.7" stroke="#0E315C" stroke-width="0.9" fill="none" opacity="0.9"/><path d="M666.0,479.6 L684.0,486.4" stroke="#0E315C" stroke-width="0.9" fill="none" opacity="0.9"/><path d="M755.6,391.2 L768.2,394.1" stroke="#0E315C" stroke-width="1.0" fill="none" opacity="0.85"/><path d="M754.4,390.3 L767.0,393.2" stroke="#2A7FD2" stroke-width="0.8" fill="none" opacity="0.5"/><path d="M768.2,388.3 C769.2,389.8 772.9,393.0 774.0,397.0 C775.1,401.0 775.4,409.0 774.9,412.4 C774.4,415.8 771.7,416.4 771.1,417.2" stroke="#0E315C" stroke-width="1.0" fill="none" opacity="0.85"/><path d="M767.0,387.4 C768.0,388.9 771.7,392.1 772.8,396.1 C773.9,400.1 774.2,408.1 773.7,411.5 C773.2,414.9 770.5,415.5 769.9,416.3" stroke="#2A7FD2" stroke-width="0.8" fill="none" opacity="0.5"/><path d="M748.9,408.5 L767.2,413.4" stroke="#0E315C" stroke-width="1.0" fill="none" opacity="0.85"/><path d="M747.7,407.6 L766.0,412.5" stroke="#2A7FD2" stroke-width="0.8" fill="none" opacity="0.5"/><path d="M748.9,424.0 L779.7,432.6" stroke="#0E315C" stroke-width="1.0" fill="none" opacity="0.85"/><path d="M747.7,423.1 L778.5,431.7" stroke="#2A7FD2" stroke-width="0.8" fill="none" opacity="0.5"/><path d="M743.1,449.0 L749.9,451.0" stroke="#0E315C" stroke-width="1.0" fill="none" opacity="0.85"/><path d="M741.9,448.1 L748.7,450.1" stroke="#2A7FD2" stroke-width="0.8" fill="none" opacity="0.5"/><path d="M754.7,444.2 L755.6,460.6" stroke="#0E315C" stroke-width="1.0" fill="none" opacity="0.85"/><path d="M753.5,443.3 L754.4,459.7" stroke="#2A7FD2" stroke-width="0.8" fill="none" opacity="0.5"/><path d="M755.6,453.8 L775.9,458.6" stroke="#0E315C" stroke-width="1.0" fill="none" opacity="0.85"/><path d="M754.4,452.9 L774.7,457.7" stroke="#2A7FD2" stroke-width="0.8" fill="none" opacity="0.5"/><path d="M777.8,448.0 C778.4,450.1 781.5,458.2 781.7,460.6 C781.9,463.0 779.3,462.2 778.8,462.5" stroke="#0E315C" stroke-width="1.0" fill="none" opacity="0.85"/><path d="M776.6,447.1 C777.2,449.2 780.3,457.3 780.5,459.7 C780.7,462.1 778.1,461.3 777.6,461.6" stroke="#2A7FD2" stroke-width="0.8" fill="none" opacity="0.5"/><path d="M755.6,468.3 L781.7,475.0" stroke="#0E315C" stroke-width="1.0" fill="none" opacity="0.85"/><path d="M754.4,467.4 L780.5,474.1" stroke="#2A7FD2" stroke-width="0.8" fill="none" opacity="0.5"/><path d="M755.6,475.0 L755.6,489.5" stroke="#0E315C" stroke-width="1.0" fill="none" opacity="0.85"/><path d="M754.4,474.1 L754.4,488.6" stroke="#2A7FD2" stroke-width="0.8" fill="none" opacity="0.5"/><path d="M753.7,490.4 L783.6,499.1" stroke="#0E315C" stroke-width="1.0" fill="none" opacity="0.85"/><path d="M752.5,489.5 L782.4,498.2" stroke="#2A7FD2" stroke-width="0.8" fill="none" opacity="0.5"/><path d="M781.7,476.0 L782.6,501.0" stroke="#0E315C" stroke-width="1.0" fill="none" opacity="0.85"/><path d="M780.5,475.1 L781.4,500.1" stroke="#2A7FD2" stroke-width="0.8" fill="none" opacity="0.5"/><path d="M756.6,505.8 C758.5,506.1 766.0,504.1 768.2,507.8 C770.5,511.5 769.8,524.6 770.1,528.0" stroke="#0E315C" stroke-width="1.0" fill="none" opacity="0.85"/><path d="M755.4,504.9 C757.3,505.2 764.8,503.2 767.0,506.9 C769.2,510.6 768.6,523.7 768.9,527.1" stroke="#2A7FD2" stroke-width="0.8" fill="none" opacity="0.5"/><path d="M757.6,511.6 L758.5,526.0" stroke="#0E315C" stroke-width="1.0" fill="none" opacity="0.85"/><path d="M756.4,510.7 L757.3,525.1" stroke="#2A7FD2" stroke-width="0.8" fill="none" opacity="0.5"/><path d="M778.8,513.5 C779.6,513.7 782.8,510.8 783.6,514.5 C784.4,518.2 783.6,532.2 783.6,535.7" stroke="#0E315C" stroke-width="1.0" fill="none" opacity="0.85"/><path d="M777.6,512.6 C778.4,512.8 781.6,509.9 782.4,513.6 C783.2,517.3 782.4,531.3 782.4,534.8" stroke="#2A7FD2" stroke-width="0.8" fill="none" opacity="0.5"/></g><path d="M601.5,476 L817.2,547.2 L858,527.5" stroke="#0A2140" stroke-width="1.3" fill="none"/><path d="M602.5,478 L817,549" stroke="#2A7FD0" stroke-width="0.8" fill="none" opacity=".6"/><clipPath id="clA2"><polygon points="605.5,477 816.5,546.5 816.5,591 609.6,513.6"/></clipPath><g clip-path="url(#clA2)"><rect x="804" y="540" width="13" height="55" fill="url(#lhl)"/></g><ellipse cx="837.6" cy="557" rx="5.6" ry="9.6" fill="#2E97EC" transform="rotate(-6 837.6 557)"/><ellipse cx="839.8" cy="557.6" rx="4.2" ry="8" fill="#164377" transform="rotate(-6 839.8 557.6)"/><path d="M575.6,266.8 L577.5,289" stroke="#1C901C" stroke-width="1" fill="none"/><path d="M575.6,266.8 L597,261" stroke="#1C901C" stroke-width="1" fill="none"/><path d="M575.6,266.8 L588,271" stroke="#1C901C" stroke-width="1" fill="none"/><path d="M635.5,247.2 L616,253.5" stroke="#1C901C" stroke-width="1" fill="none"/><path d="M635.5,247.2 L657,252" stroke="#1C901C" stroke-width="1" fill="none"/><path d="M635.5,247.2 L635.5,247.2" stroke="#1C901C" stroke-width="1" fill="none"/><path d="M863.2,300.2 L864.4,322.5" stroke="#1C901C" stroke-width="1" fill="none"/><path d="M863.2,300.2 L841,295" stroke="#1C901C" stroke-width="1" fill="none"/><path d="M863.2,300.2 L846,307" stroke="#1C901C" stroke-width="1" fill="none"/><path d="M808,324 L808.5,347" stroke="#1C901C" stroke-width="1" fill="none"/><path d="M808,324 L826,316.5" stroke="#1C901C" stroke-width="1" fill="none"/><path d="M808,324 L786,318.5" stroke="#1C901C" stroke-width="1" fill="none"/><path d="M599,514.6 L597.5,496" stroke="#1C901C" stroke-width="1" fill="none"/><path d="M599,514.6 L613,521" stroke="#1C901C" stroke-width="1" fill="none"/><path d="M599,514.6 L610,508" stroke="#1C901C" stroke-width="1" fill="none"/><path d="M815.5,592 L814.5,574" stroke="#1C901C" stroke-width="1" fill="none"/><path d="M815.5,592 L800,586" stroke="#1C901C" stroke-width="1" fill="none"/><path d="M815.5,592 L829.5,584" stroke="#1C901C" stroke-width="1" fill="none"/><path d="M862,563.5 L862.5,545" stroke="#1C901C" stroke-width="1" fill="none"/><path d="M862,563.5 L848,570.5" stroke="#1C901C" stroke-width="1" fill="none"/><path d="M862,563.5 L862,563.5" stroke="#1C901C" stroke-width="1" fill="none"/><polygon points="888.6,330.5 893.0,327.0 925.0,311.5 934.0,310.0 1190.0,367.5 1195.5,371.5 1194.0,380.0 1160.0,400.0 888.8,336.0" fill="#0C2747"/><polygon points="1158.0,394.0 1195.8,371.5 1178.0,595.5 1143.0,625.0" fill="url(#rsg)"/><polygon points="888.8,331.8 1160.0,396.0 1162.5,394.5 1153.0,507.0 1148.5,619.0 1145.0,624.5 1139.5,627.0 1134.0,625.5 890.5,544.3" fill="url(#rfg)"/><clipPath id="clB"><polygon points="888.8,331.8 1160.0,396.0 1162.5,394.5 1153.0,507.0 1148.5,619.0 1145.0,624.5 1139.5,627.0 1134.0,625.5 890.5,544.3"/></clipPath><g clip-path="url(#clB)"><g transform="translate(1162.5,394.5) skewX(-3.9)"><rect x="-17" y="-8" width="18.5" height="245" fill="url(#rhl)"/></g><polygon points="1057.5,372.0 1065.0,374.0 1060.0,420.0 1046.0,484.0 1041.0,484.0" fill="#3A9FF5" opacity=".55"/><path d="M1057.0,371.5 C1056.8,380.9 1057.6,409.9 1055.5,428.0 C1053.4,446.1 1047.1,468.0 1044.5,480.0 C1041.9,492.0 1040.8,496.7 1040.0,500.0" stroke="#0F3462" stroke-width="0.9" fill="none" opacity="0.9"/><path d="M1065.5,374.0 C1064.9,382.5 1064.2,409.0 1062.0,425.0 C1059.8,441.0 1054.7,457.8 1052.0,470.0 C1049.3,482.2 1047.5,489.7 1046.0,498.0 C1044.5,506.3 1043.5,516.3 1043.0,520.0" stroke="#0F3462" stroke-width="0.9" fill="none" opacity="0.9"/><path d="M903.7,336.5 C904.3,342.6 905.4,360.2 907.4,373.0 C909.4,385.8 914.2,406.5 915.6,413.2" stroke="#45BDFF" stroke-width="1.8" fill="none" stroke-linecap="round"/><path d="M906.3,336.9 C906.9,343.0 908.0,360.6 910.0,373.4 C912.0,386.2 916.8,406.9 918.2,413.6" stroke="#0F3A6E" stroke-width="0.9199999999999999" fill="none" opacity="0.95"/><path d="M901.4,336.1 C902.0,342.2 903.1,359.8 905.1,372.6 C907.0,385.4 911.9,406.1 913.3,412.8" stroke="#0F3A6E" stroke-width="0.8" fill="none" opacity="0.75"/><path d="M889.5,378.5 C890.6,383.7 893.1,399.5 896.4,409.5 C899.7,419.5 904.6,426.9 909.2,438.7 C913.8,450.4 920.5,467.8 923.8,480.0 C927.1,492.2 927.8,499.3 929.0,512.0 C930.2,524.7 930.7,548.7 931.0,556.0" stroke="#45BDFF" stroke-width="1.8" fill="none" stroke-linecap="round"/><path d="M892.1,378.9 C893.2,384.1 895.7,399.9 899.0,409.9 C902.3,419.9 907.2,427.3 911.8,439.1 C916.4,450.8 923.1,468.2 926.4,480.4 C929.7,492.6 930.4,499.7 931.6,512.4 C932.8,525.1 933.3,549.1 933.6,556.4" stroke="#0F3A6E" stroke-width="0.9199999999999999" fill="none" opacity="0.95"/><path d="M887.2,378.1 C888.3,383.3 890.8,399.1 894.1,409.1 C897.3,419.1 902.3,426.6 906.9,438.3 C911.4,450.1 918.2,467.4 921.5,479.6 C924.8,491.8 925.5,498.9 926.7,511.6 C927.9,524.3 928.3,548.3 928.7,555.6" stroke="#0F3A6E" stroke-width="0.8" fill="none" opacity="0.75"/><path d="M889.5,424.1 C891.0,427.8 895.0,439.3 898.3,446.0 C901.6,452.7 906.2,457.6 909.2,464.3 C912.2,471.0 914.5,476.7 916.0,486.0 C917.5,495.3 917.9,508.8 918.5,520.0 C919.1,531.2 919.3,547.5 919.5,553.0" stroke="#45BDFF" stroke-width="1.8" fill="none" stroke-linecap="round"/><path d="M892.1,424.5 C893.6,428.1 897.6,439.7 900.9,446.4 C904.2,453.1 908.9,458.0 911.8,464.7 C914.8,471.4 917.1,477.1 918.6,486.4 C920.1,495.7 920.5,509.2 921.1,520.4 C921.7,531.6 921.9,547.9 922.1,553.4" stroke="#0F3A6E" stroke-width="0.9199999999999999" fill="none" opacity="0.95"/><path d="M887.2,423.7 C888.6,427.4 892.7,438.9 896.0,445.6 C899.2,452.3 903.9,457.2 906.9,463.9 C909.8,470.6 912.1,476.3 913.7,485.6 C915.2,494.9 915.6,508.4 916.2,519.6 C916.7,530.8 917.0,547.1 917.2,552.6" stroke="#0F3A6E" stroke-width="0.8" fill="none" opacity="0.75"/><path d="M889.5,446.0 C890.6,449.1 894.2,458.1 896.4,464.3 C898.6,470.5 901.0,474.6 902.5,483.0 C904.0,491.4 904.8,504.0 905.5,515.0 C906.2,526.0 906.3,543.3 906.5,549.0" stroke="#45BDFF" stroke-width="1.8" fill="none" stroke-linecap="round"/><path d="M892.1,446.4 C893.2,449.4 896.8,458.5 899.0,464.7 C901.2,470.9 903.6,474.9 905.1,483.4 C906.6,491.8 907.4,504.4 908.1,515.4 C908.8,526.4 908.9,543.7 909.1,549.4" stroke="#0F3A6E" stroke-width="0.9199999999999999" fill="none" opacity="0.95"/><path d="M887.2,445.6 C888.3,448.7 891.9,457.7 894.1,463.9 C896.2,470.1 898.6,474.2 900.2,482.6 C901.7,491.1 902.5,503.6 903.2,514.6 C903.8,525.6 904.0,542.9 904.2,548.6" stroke="#0F3A6E" stroke-width="0.8" fill="none" opacity="0.75"/><path d="M890.0,478.0 C890.7,481.7 893.1,488.8 894.0,500.0 C894.9,511.2 895.2,537.5 895.5,545.0" stroke="#45BDFF" stroke-width="1.8" fill="none" stroke-linecap="round"/><path d="M892.6,478.4 C893.3,482.1 895.7,489.2 896.6,500.4 C897.5,511.6 897.9,537.9 898.1,545.4" stroke="#0F3A6E" stroke-width="0.9199999999999999" fill="none" opacity="0.95"/><path d="M887.7,477.6 C888.3,481.3 890.7,488.4 891.7,499.6 C892.6,510.8 892.9,537.1 893.2,544.6" stroke="#0F3A6E" stroke-width="0.8" fill="none" opacity="0.75"/><path d="M934.5,486.0 C935.3,490.0 938.2,501.8 939.5,510.0 C940.8,518.2 941.5,526.5 942.0,535.0 C942.5,543.5 942.4,556.7 942.5,561.0" stroke="#45BDFF" stroke-width="1.8" fill="none" stroke-linecap="round"/><path d="M937.1,486.4 C937.9,490.4 940.9,502.2 942.1,510.4 C943.4,518.6 944.1,526.9 944.6,535.4 C945.1,543.9 945.0,557.1 945.1,561.4" stroke="#0F3A6E" stroke-width="0.9199999999999999" fill="none" opacity="0.95"/><path d="M932.2,485.6 C933.0,489.6 935.9,501.4 937.2,509.6 C938.4,517.8 939.2,526.1 939.7,534.6 C940.2,543.1 940.1,556.3 940.2,560.6" stroke="#0F3A6E" stroke-width="0.8" fill="none" opacity="0.75"/><path d="M897.3,334.7 C897.8,341.1 898.1,360.5 900.1,373.0 C902.1,385.5 905.0,395.8 909.2,409.5 C913.5,423.2 921.5,442.3 925.6,455.2 C929.7,468.1 932.6,481.7 934.0,487.0" stroke="#0F3462" stroke-width="0.9" fill="none" opacity="0.9"/><path d="M946.0,490.5 C946.0,496.4 946.3,514.0 946.3,525.8 C946.3,537.6 946.0,555.2 946.0,561.1" stroke="#45BDFF" stroke-width="1.8" fill="none" stroke-linecap="round"/><path d="M948.4,490.9 C948.4,496.8 948.7,514.4 948.7,526.2 C948.7,538.0 948.4,555.6 948.4,561.5" stroke="#0F3A6E" stroke-width="0.9199999999999999" fill="none" opacity="0.95"/><path d="M943.8,490.1 C943.9,496.0 944.1,513.6 944.1,525.4 C944.1,537.2 943.9,554.8 943.8,560.7" stroke="#0F3A6E" stroke-width="0.8" fill="none" opacity="0.75"/><path d="M953.5,494.0 L953.8,563.7" stroke="#0F3A6E" stroke-width="0.9" fill="none" opacity="0.9"/><path d="M961.0,497.0 C961.0,502.8 961.2,520.1 961.3,531.6 C961.4,543.2 961.5,560.5 961.5,566.2" stroke="#45BDFF" stroke-width="1.8" fill="none" stroke-linecap="round"/><path d="M963.4,497.4 C963.4,503.2 963.6,520.5 963.7,532.0 C963.8,543.6 963.9,560.9 963.9,566.6" stroke="#0F3A6E" stroke-width="0.9199999999999999" fill="none" opacity="0.95"/><path d="M958.8,496.6 C958.9,502.4 959.1,519.7 959.1,531.2 C959.2,542.8 959.3,560.1 959.3,565.8" stroke="#0F3A6E" stroke-width="0.8" fill="none" opacity="0.75"/><path d="M968.7,500.0 L969.5,568.9" stroke="#0F3A6E" stroke-width="0.9" fill="none" opacity="0.9"/><path d="M976.4,502.6 C976.4,508.3 976.5,525.6 976.7,537.0 C976.9,548.5 977.3,565.7 977.4,571.5" stroke="#45BDFF" stroke-width="1.8" fill="none" stroke-linecap="round"/><path d="M978.8,503.0 C978.8,508.7 978.9,526.0 979.1,537.4 C979.3,548.9 979.7,566.1 979.8,571.9" stroke="#0F3A6E" stroke-width="0.9199999999999999" fill="none" opacity="0.95"/><path d="M974.2,502.2 C974.3,507.9 974.4,525.2 974.5,536.6 C974.7,548.1 975.1,565.3 975.2,571.1" stroke="#0F3A6E" stroke-width="0.8" fill="none" opacity="0.75"/><path d="M984.0,505.0 L985.2,574.1" stroke="#0F3A6E" stroke-width="0.9" fill="none" opacity="0.9"/><path d="M991.7,507.4 C991.8,513.2 991.8,530.5 992.0,542.1 C992.2,553.6 993.0,570.9 993.2,576.7" stroke="#45BDFF" stroke-width="1.8" fill="none" stroke-linecap="round"/><path d="M994.1,507.8 C994.1,513.6 994.1,530.9 994.4,542.5 C994.6,554.0 995.4,571.3 995.6,577.1" stroke="#0F3A6E" stroke-width="0.9199999999999999" fill="none" opacity="0.95"/><path d="M989.5,507.0 C989.6,512.8 989.6,530.1 989.8,541.7 C990.1,553.2 990.8,570.5 991.0,576.3" stroke="#0F3A6E" stroke-width="0.8" fill="none" opacity="0.75"/><path d="M999.4,510.0 L1001.1,579.3" stroke="#0F3A6E" stroke-width="0.9" fill="none" opacity="0.9"/><path d="M1007.0,513.0 C1007.0,518.7 1007.0,536.0 1007.3,547.5 C1007.6,558.9 1008.7,576.2 1009.0,581.9" stroke="#45BDFF" stroke-width="1.8" fill="none" stroke-linecap="round"/><path d="M1009.4,513.4 C1009.4,519.1 1009.4,536.4 1009.7,547.9 C1010.0,559.3 1011.1,576.6 1011.4,582.3" stroke="#0F3A6E" stroke-width="0.9199999999999999" fill="none" opacity="0.95"/><path d="M1004.8,512.6 C1004.9,518.3 1004.8,535.6 1005.1,547.1 C1005.5,558.5 1006.6,575.8 1006.8,581.5" stroke="#0F3A6E" stroke-width="0.8" fill="none" opacity="0.75"/><path d="M1014.8,517.0 L1017.0,584.6" stroke="#0F3A6E" stroke-width="0.9" fill="none" opacity="0.9"/><path d="M1022.5,521.0 C1022.5,526.5 1022.4,543.1 1022.8,554.1 C1023.2,565.1 1024.6,581.7 1025.0,587.2" stroke="#45BDFF" stroke-width="1.8" fill="none" stroke-linecap="round"/><path d="M1024.9,521.4 C1025.0,526.9 1024.8,543.5 1025.2,554.5 C1025.6,565.5 1027.0,582.1 1027.4,587.6" stroke="#0F3A6E" stroke-width="0.9199999999999999" fill="none" opacity="0.95"/><path d="M1020.3,520.6 C1020.4,526.1 1020.2,542.7 1020.6,553.7 C1021.1,564.7 1022.5,581.3 1022.8,586.8" stroke="#0F3A6E" stroke-width="0.8" fill="none" opacity="0.75"/><path d="M1030.0,525.0 L1032.8,589.8" stroke="#0F3A6E" stroke-width="0.9" fill="none" opacity="0.9"/><path d="M1037.5,529.0 C1037.5,534.3 1037.3,550.1 1037.8,560.7 C1038.3,571.2 1040.0,587.0 1040.5,592.3" stroke="#45BDFF" stroke-width="1.8" fill="none" stroke-linecap="round"/><path d="M1039.9,529.4 C1040.0,534.7 1039.7,550.5 1040.2,561.1 C1040.7,571.6 1042.5,587.4 1042.9,592.7" stroke="#0F3A6E" stroke-width="0.9199999999999999" fill="none" opacity="0.95"/><path d="M1035.3,528.6 C1035.4,533.9 1035.1,549.7 1035.6,560.3 C1036.1,570.8 1037.9,586.6 1038.3,591.9" stroke="#0F3A6E" stroke-width="0.8" fill="none" opacity="0.75"/><path d="M1062.6,540.3 L1061.8,599.6" stroke="#45BDFF" stroke-width="1.8" fill="none" stroke-linecap="round"/><path d="M1065.2,540.7 L1064.4,600.0" stroke="#0F3A6E" stroke-width="0.9199999999999999" fill="none" opacity="0.95"/><path d="M1060.3,539.9 L1059.5,599.2" stroke="#0F3A6E" stroke-width="0.8" fill="none" opacity="0.75"/><path d="M1072.8,543.4 L1072.0,603.0" stroke="#45BDFF" stroke-width="1.8" fill="none" stroke-linecap="round"/><path d="M1075.4,543.8 L1074.6,603.4" stroke="#0F3A6E" stroke-width="0.9199999999999999" fill="none" opacity="0.95"/><path d="M1070.5,543.0 L1069.7,602.6" stroke="#0F3A6E" stroke-width="0.8" fill="none" opacity="0.75"/><path d="M1083.0,546.5 L1082.2,606.3" stroke="#45BDFF" stroke-width="1.8" fill="none" stroke-linecap="round"/><path d="M1085.6,546.9 L1084.8,606.7" stroke="#0F3A6E" stroke-width="0.9199999999999999" fill="none" opacity="0.95"/><path d="M1080.7,546.1 L1079.9,605.9" stroke="#0F3A6E" stroke-width="0.8" fill="none" opacity="0.75"/><path d="M1093.2,549.6 L1092.4,609.7" stroke="#45BDFF" stroke-width="1.8" fill="none" stroke-linecap="round"/><path d="M1095.8,550.0 L1095.0,610.1" stroke="#0F3A6E" stroke-width="0.9199999999999999" fill="none" opacity="0.95"/><path d="M1090.9,549.2 L1090.1,609.3" stroke="#0F3A6E" stroke-width="0.8" fill="none" opacity="0.75"/><path d="M1103.4,552.7 L1102.6,613.1" stroke="#45BDFF" stroke-width="1.8" fill="none" stroke-linecap="round"/><path d="M1106.0,553.1 L1105.2,613.5" stroke="#0F3A6E" stroke-width="0.9199999999999999" fill="none" opacity="0.95"/><path d="M1101.1,552.3 L1100.3,612.7" stroke="#0F3A6E" stroke-width="0.8" fill="none" opacity="0.75"/><path d="M1113.6,556.0 L1112.8,616.4" stroke="#45BDFF" stroke-width="1.8" fill="none" stroke-linecap="round"/><path d="M1116.2,556.4 L1115.4,616.8" stroke="#0F3A6E" stroke-width="0.9199999999999999" fill="none" opacity="0.95"/><path d="M1111.3,555.6 L1110.5,616.0" stroke="#0F3A6E" stroke-width="0.8" fill="none" opacity="0.75"/><path d="M1058.0,484.0 C1057.0,488.3 1054.0,499.8 1052.0,510.0 C1050.0,520.2 1047.5,531.7 1046.0,545.0 C1044.5,558.3 1043.5,582.5 1043.0,590.0" stroke="#45BDFF" stroke-width="1.8" fill="none" stroke-linecap="round"/><path d="M1060.6,484.4 C1059.6,488.7 1056.6,500.2 1054.6,510.4 C1052.6,520.6 1050.1,532.1 1048.6,545.4 C1047.1,558.7 1046.1,582.9 1045.6,590.4" stroke="#0F3A6E" stroke-width="0.9199999999999999" fill="none" opacity="0.95"/><path d="M1055.7,483.6 C1054.7,487.9 1051.7,499.4 1049.7,509.6 C1047.7,519.8 1045.2,531.3 1043.7,544.6 C1042.2,557.9 1041.2,582.1 1040.7,589.6" stroke="#0F3A6E" stroke-width="0.8" fill="none" opacity="0.75"/><path d="M1058.5,484.0 C1058.4,490.0 1058.4,509.3 1058.0,520.0 C1057.6,530.7 1056.3,543.3 1056.0,548.0" stroke="#0F3462" stroke-width="0.9" fill="none" opacity="0.9"/><path d="M1131.9,392.2 C1131.7,396.5 1132.5,408.6 1130.9,418.2 C1129.3,427.8 1123.7,444.7 1122.3,450.0" stroke="#0F3A6E" stroke-width="1.0" fill="none" opacity="0.9"/><path d="M1142.5,395.0 C1141.7,400.5 1141.4,414.0 1137.7,427.8 C1134.0,441.6 1123.2,469.5 1120.3,477.9" stroke="#0F3A6E" stroke-width="1.0" fill="none" opacity="0.9"/><path d="M1148.3,447.1 C1146.0,452.2 1139.8,469.4 1134.8,477.9 C1129.8,486.4 1121.1,494.7 1118.4,498.1" stroke="#0F3A6E" stroke-width="1.0" fill="none" opacity="0.9"/><path d="M1155.0,464.4 C1152.0,469.5 1143.0,486.7 1136.7,495.2 C1130.4,503.7 1120.6,512.1 1117.4,515.5" stroke="#0F3A6E" stroke-width="1.0" fill="none" opacity="0.9"/><path d="M1145.4,496.2 C1142.4,499.6 1131.9,510.8 1127.1,516.4 C1122.3,522.0 1118.3,527.6 1116.5,529.9" stroke="#0F3A6E" stroke-width="1.0" fill="none" opacity="0.9"/><path d="M1145.4,512.6 C1142.0,516.1 1129.9,525.9 1125.1,533.8 C1120.3,541.7 1118.6,551.1 1116.5,560.0 C1114.4,568.9 1113.2,578.2 1112.3,587.2 C1111.4,596.2 1111.1,609.5 1110.9,614.0" stroke="#0F3A6E" stroke-width="1.0" fill="none" opacity="0.9"/><path d="M1144.4,522.2 C1141.8,525.1 1132.5,531.1 1129.0,539.6 C1125.5,548.1 1124.8,560.1 1123.7,573.0 C1122.6,585.9 1122.5,609.7 1122.2,617.0" stroke="#0F3A6E" stroke-width="1.0" fill="none" opacity="0.9"/><path d="M1144.4,537.6 C1142.8,539.9 1137.3,542.8 1134.8,551.1 C1132.3,559.4 1130.4,575.8 1129.3,587.2 C1128.2,598.6 1128.1,614.1 1127.9,619.5" stroke="#0F3A6E" stroke-width="1.0" fill="none" opacity="0.9"/><path d="M1139.5,395.0 C1138.7,400.5 1138.3,414.2 1134.7,427.8 C1131.1,441.4 1120.6,468.4 1117.8,476.5" stroke="#45BDFF" stroke-width="1.3" fill="none" stroke-linecap="round"/><path d="M1142.5,514.0 C1139.2,517.5 1127.7,527.3 1123.0,535.0 C1118.3,542.7 1116.4,551.3 1114.2,560.0 C1112.0,568.7 1110.9,578.3 1110.0,587.0 C1109.1,595.7 1108.8,607.8 1108.6,612.0" stroke="#45BDFF" stroke-width="1.3" fill="none" stroke-linecap="round"/><path d="M1085.6,390.2 C1090.8,391.0 1111.0,393.1 1116.5,395.0 C1122.0,396.9 1118.1,400.7 1118.4,401.8" stroke="#0E3768" stroke-width="1.0" fill="none" opacity="0.9"/><path d="M1084.4,389.2 C1089.5,390.0 1109.8,392.1 1115.3,394.0 C1120.8,395.9 1116.9,399.7 1117.2,400.8" stroke="#4DB6FF" stroke-width="0.8" fill="none" opacity="0.45"/><path d="M1085.6,390.2 C1085.4,392.6 1084.7,400.7 1084.7,404.7 C1084.7,408.7 1085.4,412.7 1085.6,414.3" stroke="#0E3768" stroke-width="1.0" fill="none" opacity="0.9"/><path d="M1084.4,389.2 C1084.2,391.6 1083.5,399.7 1083.5,403.7 C1083.5,407.7 1084.2,411.7 1084.4,413.3" stroke="#4DB6FF" stroke-width="0.8" fill="none" opacity="0.45"/><path d="M1084.7,415.3 C1090.0,416.4 1111.2,419.9 1116.5,422.0 C1121.8,424.1 1116.5,426.8 1116.5,427.8" stroke="#0E3768" stroke-width="1.0" fill="none" opacity="0.9"/><path d="M1083.5,414.3 C1088.8,415.4 1110.0,418.9 1115.3,421.0 C1120.6,423.1 1115.3,425.8 1115.3,426.8" stroke="#4DB6FF" stroke-width="0.8" fill="none" opacity="0.45"/><path d="M1085.6,415.3 C1085.1,417.7 1083.1,426.0 1082.8,429.7 C1082.5,433.4 1083.5,436.1 1083.7,437.4" stroke="#0E3768" stroke-width="1.0" fill="none" opacity="0.9"/><path d="M1084.4,414.3 C1083.9,416.7 1081.9,425.0 1081.6,428.7 C1081.3,432.4 1082.3,435.1 1082.5,436.4" stroke="#4DB6FF" stroke-width="0.8" fill="none" opacity="0.45"/><path d="M1079.9,438.4 C1085.7,439.8 1108.6,444.9 1114.5,447.1 C1120.4,449.4 1115.3,451.1 1115.5,451.9" stroke="#0E3768" stroke-width="1.0" fill="none" opacity="0.9"/><path d="M1078.7,437.4 C1084.5,438.8 1107.4,443.9 1113.3,446.1 C1119.2,448.4 1114.1,450.1 1114.3,450.9" stroke="#4DB6FF" stroke-width="0.8" fill="none" opacity="0.45"/><path d="M1081.8,472.1 C1081.6,470.5 1079.7,465.4 1080.8,462.5 C1081.9,459.6 1084.0,455.1 1088.5,454.8 C1093.0,454.5 1103.6,458.0 1107.8,460.6 C1112.0,463.2 1112.8,466.0 1113.6,470.2 C1114.4,474.4 1112.8,483.0 1112.6,485.6" stroke="#0E3768" stroke-width="1.0" fill="none" opacity="0.9"/><path d="M1080.6,471.1 C1080.4,469.5 1078.5,464.4 1079.6,461.5 C1080.7,458.6 1082.8,454.1 1087.3,453.8 C1091.8,453.5 1102.4,457.0 1106.6,459.6 C1110.8,462.2 1111.6,465.0 1112.4,469.2 C1113.2,473.4 1111.6,482.0 1111.4,484.6" stroke="#4DB6FF" stroke-width="0.8" fill="none" opacity="0.45"/><path d="M1095.3,454.8 L1094.3,483.7" stroke="#0E3768" stroke-width="1.0" fill="none" opacity="0.9"/><path d="M1094.1,453.8 L1093.1,482.7" stroke="#4DB6FF" stroke-width="0.8" fill="none" opacity="0.45"/><path d="M1081.8,472.1 C1082.3,473.4 1081.0,477.7 1084.7,479.8 C1088.4,481.9 1100.8,483.8 1104.0,484.6" stroke="#0E3768" stroke-width="1.0" fill="none" opacity="0.9"/><path d="M1080.6,471.1 C1081.1,472.4 1079.8,476.7 1083.5,478.8 C1087.2,480.9 1099.6,482.8 1102.8,483.6" stroke="#4DB6FF" stroke-width="0.8" fill="none" opacity="0.45"/><path d="M1067.3,489.5 C1074.7,491.8 1104.3,500.3 1111.7,503.0 C1119.1,505.7 1111.7,505.3 1111.7,505.8" stroke="#0E3768" stroke-width="1.0" fill="none" opacity="0.9"/><path d="M1066.1,488.5 C1073.5,490.8 1103.1,499.3 1110.5,502.0 C1117.9,504.7 1110.5,504.3 1110.5,504.8" stroke="#4DB6FF" stroke-width="0.8" fill="none" opacity="0.45"/><path d="M1078.9,526.1 C1078.9,524.5 1077.6,519.4 1078.9,516.4 C1080.2,513.4 1082.1,508.1 1086.6,507.8 C1091.1,507.5 1101.9,511.8 1105.9,514.5 C1109.9,517.2 1110.4,519.6 1110.7,524.1 C1111.0,528.6 1108.3,538.6 1107.8,541.5" stroke="#0E3768" stroke-width="1.0" fill="none" opacity="0.9"/><path d="M1077.7,525.1 C1077.7,523.5 1076.4,518.4 1077.7,515.4 C1079.0,512.4 1080.9,507.1 1085.4,506.8 C1089.9,506.5 1100.7,510.8 1104.7,513.5 C1108.7,516.2 1109.2,518.6 1109.5,523.1 C1109.8,527.6 1107.1,537.6 1106.6,540.5" stroke="#4DB6FF" stroke-width="0.8" fill="none" opacity="0.45"/><path d="M1093.4,508.7 L1091.4,535.7" stroke="#0E3768" stroke-width="1.0" fill="none" opacity="0.9"/><path d="M1092.2,507.7 L1090.2,534.7" stroke="#4DB6FF" stroke-width="0.8" fill="none" opacity="0.45"/><path d="M1078.9,526.1 C1079.6,527.4 1079.3,531.9 1082.8,533.8 C1086.3,535.7 1097.2,537.0 1100.1,537.6" stroke="#0E3768" stroke-width="1.0" fill="none" opacity="0.9"/><path d="M1077.7,525.1 C1078.3,526.4 1078.1,530.9 1081.6,532.8 C1085.1,534.7 1096.0,536.0 1098.9,536.6" stroke="#4DB6FF" stroke-width="0.8" fill="none" opacity="0.45"/><path d="M949.4,367.4 L995,382.9" fill="none" stroke="#3A9CF4" stroke-width="3" opacity=".55" stroke-linecap="round"/><path d="M964,351 L964,369.5 M990.4,357.5 L990.4,377" fill="none" stroke="#3A9CF4" stroke-width="3" opacity=".55" stroke-linecap="round"/><path d="M964.6,387 q0,-7 7,-5.6 l12,3.2 q6,1.6 6,8 l0,30 q0,5 -5,3.6 l-13,-3.6 q-7,-2.5 -7,-9 Z" fill="none" stroke="#3A9CF4" stroke-width="3" opacity=".55" stroke-linecap="round"/><path d="M963,437 q0,-6.5 6,-5.2 l23,6.2 M963,437 l0,33 q0,4 4,5.4 l24,6.6" fill="none" stroke="#3A9CF4" stroke-width="3" opacity=".55" stroke-linecap="round"/><path d="M949.4,367.4 L995,382.9" fill="none" stroke="#174F92" stroke-width="0.9" opacity=".8" transform="translate(1.4,0.9)"/><path d="M949.4,367.4 L995,382.9" fill="none" stroke="#4FB6FF" stroke-width="0.8" opacity=".7" transform="translate(-1.3,-0.8)"/><path d="M964,351 L964,369.5 M990.4,357.5 L990.4,377" fill="none" stroke="#174F92" stroke-width="0.9" opacity=".8" transform="translate(1.4,0.9)"/><path d="M964,351 L964,369.5 M990.4,357.5 L990.4,377" fill="none" stroke="#4FB6FF" stroke-width="0.8" opacity=".7" transform="translate(-1.3,-0.8)"/><path d="M964.6,387 q0,-7 7,-5.6 l12,3.2 q6,1.6 6,8 l0,30 q0,5 -5,3.6 l-13,-3.6 q-7,-2.5 -7,-9 Z" fill="none" stroke="#174F92" stroke-width="0.9" opacity=".8" transform="translate(1.4,0.9)"/><path d="M964.6,387 q0,-7 7,-5.6 l12,3.2 q6,1.6 6,8 l0,30 q0,5 -5,3.6 l-13,-3.6 q-7,-2.5 -7,-9 Z" fill="none" stroke="#4FB6FF" stroke-width="0.8" opacity=".7" transform="translate(-1.3,-0.8)"/><path d="M963,437 q0,-6.5 6,-5.2 l23,6.2 M963,437 l0,33 q0,4 4,5.4 l24,6.6" fill="none" stroke="#174F92" stroke-width="0.9" opacity=".8" transform="translate(1.4,0.9)"/><path d="M963,437 q0,-6.5 6,-5.2 l23,6.2 M963,437 l0,33 q0,4 4,5.4 l24,6.6" fill="none" stroke="#4FB6FF" stroke-width="0.8" opacity=".7" transform="translate(-1.3,-0.8)"/></g><ellipse cx="1177.6" cy="407" rx="5.4" ry="13.5" fill="#2E97EC" transform="rotate(9 1177.6 407)"/><ellipse cx="1180" cy="407.6" rx="4" ry="11.6" fill="#123C6A" transform="rotate(9 1180 407.6)"/><rect x="342.5" y="94.5" width="1124" height="788" fill="none" stroke="#fff" stroke-opacity=".13" stroke-width="1"/></svg><svg class="abs" style="left:342px;top:883px" width="1125" height="90" viewBox="342 883 1125 90"><symbol id="Lb" viewBox="0 0 208 283" overflow="visible">
<polygon points="68,24 140,0 206,26 142,50" fill="#E9E9E9"/>
<polygon points="68,24 142,50 142,173 68,143" fill="#727272"/>
<polygon points="142,50 206,26 208,220 142,250" fill="#CFCECD"/>
<polygon points="0,163 65,140 140,170 73,198" fill="#EAEAEA"/>
<polygon points="0,163 73,198 73,283 0,248" fill="#727272"/>
<polygon points="73,198 140,170 142,250 73,283" fill="#CFCECD"/>
</symbol><circle cx="373" cy="928" r="22.1" fill="none" stroke="#fff" stroke-width="3.4"/><polygon points="359.00,928.00 369.20,917.20 376.50,917.20 369.20,925.10 386.00,925.10 386.00,930.85 369.20,930.85 376.50,938.96 369.20,938.96" fill="#fff"/><circle cx="1436" cy="928" r="22.1" fill="none" stroke="#fff" stroke-width="3.4"/><polygon points="1450.00,928.00 1439.80,917.20 1432.50,917.20 1439.80,925.10 1423.00,925.10 1423.00,930.85 1439.80,930.85 1432.50,938.96 1439.80,938.96" fill="#fff"/><circle cx="744.8" cy="927.8" r="22.7" fill="none" stroke="#fff" stroke-width="2.3"/><use href="#Lb" x="732.30" y="910.80" width="25.30" height="34.42"/><circle cx="759" cy="940.4" r="8.8" fill="#0A9EE6"/><path d="M753.5,940.4h11M759,934.9v11" stroke="#fff" stroke-width="1.7"/><circle cx="909.8" cy="927.8" r="22.7" fill="none" stroke="#fff" stroke-width="2.3"/><use href="#Lb" x="897.20" y="910.80" width="25.60" height="34.83"/><circle cx="923.9" cy="940.4" r="8.9" fill="#0A9EE6"/><path d="M918.2,940.4h11.4" stroke="#fff" stroke-width="2"/><circle cx="961.9" cy="927.8" r="22.7" fill="none" stroke="#fff" stroke-width="2.3"/><use href="#Lb" x="943.30" y="911.60" width="19.30" height="26.26"/><use href="#Lb" x="957.00" y="917.20" width="21.80" height="29.66"/><path d="M951.8,923.4 L966,928.2 L967,925.2 L971.2,931.6 L963.6,934.6 L964.7,931.6 L950.8,926.6Z" fill="#0A9EE6"/><circle cx="1012.9" cy="927.8" r="22.7" fill="none" stroke="#fff" stroke-width="2.3"/><polygon points="996.54,914.89 1002.49,910.42 1007.33,916.00 1001.00,918.61" fill="#787878"/><polygon points="1002.49,910.42 1008.82,907.07 1015.52,913.77 1011.05,927.91 1006.58,921.58 1007.33,916.00" fill="#D0D0D0"/><polygon points="1001.00,918.61 1007.33,916.52 1006.58,921.58 997.65,925.31" fill="#E6E6E6"/><polygon points="997.28,925.68 1006.58,921.58 1011.05,927.91 1003.23,931.63" fill="#7A7A7A"/><path d="M1014.40,917.86 Q1022.59,922.33 1022.96,934.24 L1017.38,934.24 Q1017.00,927.54 1013.13,923.44Z" fill="#0E9BE0"/><polygon points="1014.77,934.09 1025.19,934.09 1019.98,940.19" fill="#0E9BE0"/><rect x="997.3" y="938.4" width="31.6" height="3.7" rx="1.8" fill="#8EC6F6"/><rect x="998.6" y="939.4" width="29" height="1.5" rx=".7" fill="#C4E1FB"/><polygon points="1017.38,938.33 1022.59,938.33 1019.98,940.19" fill="#0E9BE0"/><circle cx="1063.9" cy="927.8" r="22.7" fill="none" stroke="#fff" stroke-width="2.3"/><use href="#Lb" x="1050.50" y="911.90" width="11.90" height="16.19"/><use href="#Lb" x="1064.30" y="911.90" width="11.90" height="16.19"/><use href="#Lb" x="1050.50" y="929.00" width="11.90" height="16.19"/><use href="#Lb" x="1064.30" y="929.00" width="11.90" height="16.19"/><rect x="773.2" y="893.2" width="108.6" height="69.7" fill="#F55A08"/><polygon points="774.3,894.2 881,894.2 881,942.2 827.7,961 774.3,942.2" fill="#000"/><path d="M776.3,940.2 L776.3,928.9 A5.9,5.9 0 0,0 776.3,917.1 L776.3,895.9 L879.1,895.9 L879.1,917.1 A5.9,5.9 0 0,0 879.1,928.9 L879.1,940.2" fill="none" stroke="#A9A9A9" stroke-width="1.5" stroke-linejoin="miter"/><path d="M775.8,940.0 L827.7,959.1 L879.6,940.0" fill="none" stroke="#fff" stroke-width="1.8" stroke-linejoin="miter"/><polygon points="817.5,954.6 837.9,954.6 827.7,960.4" fill="#fff"/><rect x="773.2" y="920.9" width="7.2" height="4.5" rx="2.2" fill="#F55A08"/><rect x="773.2" y="920.9" width="4" height="4.5" fill="#F55A08"/><rect x="874.6" y="920.9" width="7.2" height="4.5" rx="2.2" fill="#F55A08"/><rect x="877.8" y="920.9" width="4" height="4.5" fill="#F55A08"/><g font-family="Liberation Sans, sans-serif" font-weight="bold" fill="#fff" stroke="#fff" stroke-width="0.5"><text x="799.4" y="908.8" font-size="11.4" textLength="55.8" lengthAdjust="spacingAndGlyphs">MY MINI</text><text x="796.2" y="921" font-size="12.3" textLength="62" lengthAdjust="spacingAndGlyphs">FACTORY</text><text x="797.7" y="932" font-size="7.6" textLength="17.2" lengthAdjust="spacingAndGlyphs" stroke-width="0.35">FOR</text></g><path d="M824,925 h29.4 a5.2,5.2 0 0 1 5.2,5.2 v10 a5.2,5.2 0 0 1 -5.2,5.2 h-28.8 q-3,0.6 -5.8,0.9 q1.3,-1 1.3,-3.2 v-12.9 a5.2,5.2 0 0 1 3.9,-5.2Z" fill="#0B9FE3"/><g fill="none" stroke="#0A5685" stroke-width="1"><path d="M820.9,938.6 v-3.4 q0,-2.6 2.6,-2.6 h2.6"/><rect x="827.6" y="932.7" width="6" height="5.8" rx="1.7"/><path d="M835.2,930 v8.5 h3.8 q2.2,0 2.2,-2.1 v-1.7 q0,-2.1 -2.2,-2.1 h-3.8"/><rect x="842.8" y="932.7" width="6" height="5.8" rx="1.7"/><path d="M850.2,932.7 l6.6,5.8 M856.8,932.7 l-6.6,5.8"/></g></svg>
</body></html>
